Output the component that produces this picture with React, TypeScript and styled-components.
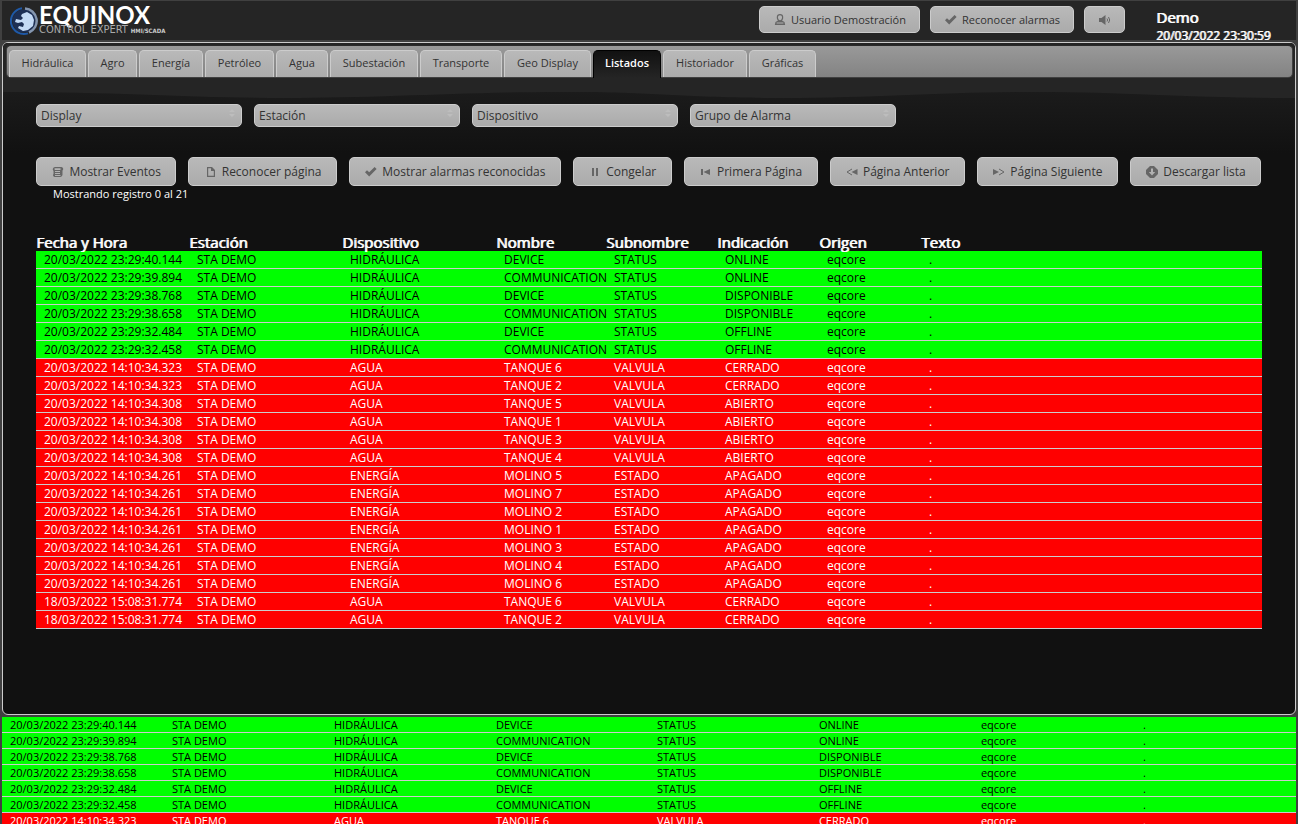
import React from "react";
import styled, { createGlobalStyle, css } from "styled-components";

const GlobalStyle = createGlobalStyle`
  *, *::before, *::after { box-sizing: border-box; }
  html, body, #root { height: 100%; }
  body {
    margin: 0;
    background: #404040;
    color: #fff;
    font-family: "Open Sans", sans-serif;
    font-size: 12px;
    overflow: hidden;
  }
  button, select { font-family: inherit; }
`;

const Page = styled.div`
  display: flex;
  flex-direction: column;
  height: 100vh;
  padding-left: 2px;
  padding-right: 2px;
  border-top: 1px solid #404040;
`;

const Header = styled.header`
  flex: none;
  display: flex;
  align-items: flex-start;
  height: 39px;
  padding: 5px 23px 0 8px;
  background: #252525;
  overflow: hidden;
`;

const Logo = styled.div`
  flex: none;
  display: flex;
  gap: 1px;
  margin-right: auto;
`;

const Mark = styled.svg`
  display: block;
  flex: none;
`;

const Wordmark = styled.div`
  display: flex;
  flex-direction: column;
  font-family: Lato, sans-serif;
  font-weight: 700;
  font-size: 24px;
  line-height: 17px;
  white-space: nowrap;
`;

const Tagline = styled.div`
  display: flex;
  align-items: baseline;
  gap: 3px;
  color: #aaa;
  font-family: "DejaVu Sans Condensed", "DejaVu Sans", sans-serif;
  font-weight: 400;
  font-size: 11px;
  line-height: 13px;
`;

const Product = styled.b`
  color: #ccc;
  font-size: 6px;
`;

const grey = css`
  border: 1px solid #ccc;
  background: linear-gradient(#b9b9b9, #ababab);
  color: #333;
`;

const HeaderActions = styled.div`
  display: flex;
  gap: 10px;
  margin-right: 31px;
`;

const Button = styled.button<{ $compact?: boolean }>`
  ${grey}
  flex: 1 1 auto;
  display: flex;
  align-items: center;
  justify-content: center;
  gap: 5px;
  height: ${(p) => (p.$compact ? 27 : 29)}px;
  padding: 0 13px 0 14px;
  border-radius: 5px;
  font-size: ${(p) => (p.$compact ? 11 : 12)}px;
  line-height: 16px;
  white-space: nowrap;
  cursor: pointer;
`;

const Icon = styled.svg`
  flex: none;
  display: block;
  fill: #666;
`;

const heavy = css`
  font-weight: 400;
  text-shadow: 1px 0 0 currentColor;
`;

const Clock = styled.div`
  ${heavy}
  width: 117px;
  padding-top: 1px;
  font-size: 12px;
  line-height: 18px;
  white-space: nowrap;
`;

const Station = styled.div`
  font-size: 15px;
  line-height: 20px;
`;

const Panel = styled.main`
  flex: none;
  display: flex;
  flex-direction: column;
  height: calc(100vh - 151px);
  margin-top: 2px;
  padding: 2px 2px 2px 3px;
  border: 1px solid #ccc;
  border-radius: 6px;
  background: #111;
  position: relative;
  overflow: hidden;
`;

const Wave = styled.svg`
  position: absolute;
  left: 0;
  top: 0;
  width: 100%;
  height: 110px;
`;

const Tabs = styled.nav`
  position: relative;
  display: flex;
  gap: 2px;
  height: 33px;
  padding: 4px 2px 0;
  border: 1px solid #404040;
  border-top-color: #2a2a2a;
  border-radius: 5px;
  background: linear-gradient(#999, #838383);
`;

const Tab = styled.a<{ $width: number; $active?: boolean }>`
  ${grey}
  flex: 0 1 ${(p) => p.$width}px;
  height: ${(p) => (p.$active ? 28 : 27)}px;
  padding: 4px 0 0;
  border-bottom: 0;
  border-radius: 5px 5px 0 0;
  font-size: 11px;
  line-height: 16px;
  text-align: center;
  text-decoration: none;
  white-space: nowrap;
  ${(p) =>
    p.$active &&
    css`
      border-color: #000;
      background: linear-gradient(#111, #252525);
      color: #fff;
      font-weight: 600;
    `}
`;

const Content = styled.div`
  position: relative;
  padding: 26px 31px 0 30px;
`;

const Filters = styled.div`
  display: flex;
  gap: 12px;
`;

const Filter = styled.label`
  ${grey}
  position: relative;
  flex: 0 1 206px;
  height: 23px;
  border-radius: 5px;
`;

const Select = styled.select`
  appearance: none;
  display: block;
  width: 100%;
  height: 21px;
  padding: 0 20px 0 4px;
  border: 0;
  background: transparent;
  color: #333;
  font-size: 12px;
  line-height: 20px;
`;

const Arrows = styled.svg`
  position: absolute;
  right: 6px;
  top: 4px;
  fill: #bdbdbd;
  pointer-events: none;
`;

const Toolbar = styled.div`
  display: flex;
  gap: 12px;
  margin-top: 30px;
  padding-right: 1px;
`;

const Summary = styled.p`
  margin: 0 0 32px;
  padding-left: 17px;
  font-size: 11px;
  line-height: 16px;
`;

const Table = styled.table`
  width: 100%;
  border-collapse: separate;
  border-spacing: 0;
  table-layout: fixed;
  white-space: nowrap;
`;

const HeadCell = styled.th`
  ${heavy}
  padding: 0 0 1px;
  font-size: 15px;
  line-height: 16px;
  text-align: left;
`;

const Row = styled.tr<{ $on: boolean; $small?: boolean }>`
  height: ${(p) => (p.$small ? 16 : 18)}px;
  background: ${(p) => (p.$on ? "#0f0" : "#f00")};
  color: ${(p) => (p.$on ? "#000" : "#fff")};
  font-size: ${(p) => (p.$small ? 11 : 12)}px;
  line-height: ${(p) => (p.$small ? 15 : 17)}px;
`;

const Cell = styled.td`
  padding: 0 0 0 8px;
  border-bottom: 1px solid #ccc;
`;

const Footer = styled.footer`
  flex: 1;
  min-height: 0;
  margin-top: 2px;
  overflow: hidden;
`;

type Event = [string, string, string, string, string];

const E = (time: string, device: string, name: string, sub: string, state: string): Event =>
  [time, device, name, sub, state];

const events: Event[] = [
  E("20/03/2022 23:29:40.144", "HIDRÁULICA", "DEVICE", "STATUS", "ONLINE"),
  E("20/03/2022 23:29:39.894", "HIDRÁULICA", "COMMUNICATION", "STATUS", "ONLINE"),
  E("20/03/2022 23:29:38.768", "HIDRÁULICA", "DEVICE", "STATUS", "DISPONIBLE"),
  E("20/03/2022 23:29:38.658", "HIDRÁULICA", "COMMUNICATION", "STATUS", "DISPONIBLE"),
  E("20/03/2022 23:29:32.484", "HIDRÁULICA", "DEVICE", "STATUS", "OFFLINE"),
  E("20/03/2022 23:29:32.458", "HIDRÁULICA", "COMMUNICATION", "STATUS", "OFFLINE"),
  E("20/03/2022 14:10:34.323", "AGUA", "TANQUE 6", "VALVULA", "CERRADO"),
  E("20/03/2022 14:10:34.323", "AGUA", "TANQUE 2", "VALVULA", "CERRADO"),
  E("20/03/2022 14:10:34.308", "AGUA", "TANQUE 5", "VALVULA", "ABIERTO"),
  E("20/03/2022 14:10:34.308", "AGUA", "TANQUE 1", "VALVULA", "ABIERTO"),
  E("20/03/2022 14:10:34.308", "AGUA", "TANQUE 3", "VALVULA", "ABIERTO"),
  E("20/03/2022 14:10:34.308", "AGUA", "TANQUE 4", "VALVULA", "ABIERTO"),
  E("20/03/2022 14:10:34.261", "ENERGÍA", "MOLINO 5", "ESTADO", "APAGADO"),
  E("20/03/2022 14:10:34.261", "ENERGÍA", "MOLINO 7", "ESTADO", "APAGADO"),
  E("20/03/2022 14:10:34.261", "ENERGÍA", "MOLINO 2", "ESTADO", "APAGADO"),
  E("20/03/2022 14:10:34.261", "ENERGÍA", "MOLINO 1", "ESTADO", "APAGADO"),
  E("20/03/2022 14:10:34.261", "ENERGÍA", "MOLINO 3", "ESTADO", "APAGADO"),
  E("20/03/2022 14:10:34.261", "ENERGÍA", "MOLINO 4", "ESTADO", "APAGADO"),
  E("20/03/2022 14:10:34.261", "ENERGÍA", "MOLINO 6", "ESTADO", "APAGADO"),
  E("18/03/2022 15:08:31.774", "AGUA", "TANQUE 6", "VALVULA", "CERRADO"),
  E("18/03/2022 15:08:31.774", "AGUA", "TANQUE 2", "VALVULA", "CERRADO"),
];

const tabs: [string, number][] = [
  ["Hidráulica", 77], ["Agro", 49], ["Energía", 64], ["Petróleo", 69], ["Agua", 52],
  ["Subestación", 88], ["Transporte", 82], ["Geo Display", 87], ["Listados", 68],
  ["Historiador", 84], ["Gráficas", 67],
];

const columns: [string, number][] = [
  ["Fecha y Hora", 153], ["Estación", 153], ["Dispositivo", 154], ["Nombre", 110],
  ["Subnombre", 111], ["Indicación", 102], ["Origen", 102], ["Texto", 341],
];

const tickerColumns = [162, 162, 162, 161, 162, 162, 162, 161];

const percent = (part: number, all: number[]) =>
  `${(part / all.reduce((a, b) => a + b, 0)) * 100}%`;

const icons = {
  user: (
    <path fillRule="evenodd" d="M6 0a3.200 3.200 0 0 0-3.200 3.400c0 1.300.5 2.400 1.200 3.100L1.500 8 .8 11h10.400l-.7-3L8 6.500c.7-.7 1.200-1.800 1.200-3.100A3.200 3.200 0 0 0 6 0zm0 1.200a2 2 0 0 1 2 2.200C8 4.800 7 6.200 6 6.200S4 4.800 4 3.400a2 2 0 0 1 2-2.200zM2.600 8.600h6.800v.8H2.600z" />
  ),
  check: <path d="M0 6.200 2 4.200l2.200 2.100L9.600 1l2 2-7.400 7.500z" />,
  sound: (
    <>
      <path d="M0 4h2.500L6.500 1v10L2.500 8H0z" />
      <path d="M8 4.500q1.200 1.500 0 3M9.500 3q2.400 3 0 6" fill="none" stroke="#666" />
    </>
  ),
  script: (
    <path fillRule="evenodd" d="M3 1h6.500a2 2 0 0 1 1 3.500V8A2.500 2.500 0 0 1 8 11H2.500A1.800 1.800 0 0 1 1.500 8V5A2.300 2.300 0 0 1 3 1zm0 1.200a1 1 0 0 0 0 1.800h5.500V2.200zM3 5v1h5V5zm0 2v1h5V7zm0 2v1h5l1-1z" />
  ),
  page: <path fillRule="evenodd" d="M2 1h5l3 3v7H2zm1.200 1.200v7.600h5.600V5H6V2.200z" />,
  pause: <path d="M3 2h2v8H3zM7 2h2v8H7z" />,
  first: <path d="M1 3h2v6H1zM3.500 6 10 3v6z" />,
  prev: (
    <>
      <path d="M5.500 6 11.500 3v6z" />
      <path d="M6 3 1 6l5 3" fill="none" stroke="#666" />
    </>
  ),
  next: (
    <>
      <path d="M0 3l6 3-6 3z" />
      <path d="M6 3l5 3-5 3" fill="none" stroke="#666" />
    </>
  ),
  down: (
    <path fillRule="evenodd" d="M4 0h4l4 4v4l-4 4H4L0 8V4zm1 2.500V6H2.800L6 9.500 9.200 6H7V2.500z" />
  ),
};

const Glyph = ({ name }: { name: keyof typeof icons }) => (
  <Icon width="12" height="12" viewBox="0 0 12 12" aria-hidden="true">{icons[name]}</Icon>
);

const actions: [keyof typeof icons, string][] = [
  ["script", "Mostrar Eventos"], ["page", "Reconocer página"],
  ["check", "Mostrar alarmas reconocidas"], ["pause", "Congelar"],
  ["first", "Primera Página"], ["prev", "Página Anterior"],
  ["next", "Página Siguiente"], ["down", "Descargar lista"],
];

const EventRow = ({ event, small }: { event: Event; small?: boolean }) => {
  const [time, device, name, sub, state] = event;
  return (
    <Row $on={sub === "STATUS"} $small={small}>
      {[time, "STA DEMO", device, name, sub, state, "eqcore", "."].map((text, i) => (
        <Cell key={i}>{text}</Cell>
      ))}
    </Row>
  );
};

export default function App() {
  const widths = columns.map((c) => c[1]);
  return (
    <>
      <GlobalStyle />
      <Page>
        <Header>
          <Logo>
            <Mark width="28" height="30" viewBox="0 0 28 30" aria-hidden="true">
              <circle cx="14" cy="15" r="11.500" fill="#1c2f55" />
              <path d="M12 2.200a13 13 0 1 0 6 25.200" fill="none" stroke="#1e59a8" strokeWidth="2" />
              <path d="M15 2.500a12.500 12.500 0 0 1 4 24" fill="none" stroke="#8496b0" strokeWidth="2.500" />
              <path d="M12 8l5-2 5 3 2 5-1 6-5 4-5 1-5-3 1-2 4 1 1-3-2-2-4 1-3-1 1-3 5 1 2-2-2-2z" fill="#c3daf5" />
            </Mark>
            <Wordmark>
              EQUINOX
              <Tagline>CONTROL EXPERT <Product>HMI/SCADA</Product></Tagline>
            </Wordmark>
          </Logo>
          <HeaderActions>
            <Button $compact><Glyph name="user" />Usuario Demostración</Button>
            <Button $compact><Glyph name="check" />Reconocer alarmas</Button>
            <Button $compact aria-label="Sonido"><Glyph name="sound" /></Button>
          </HeaderActions>
          <Clock>
            <Station>Demo</Station>
            20/03/2022 23:30:59
          </Clock>
        </Header>
        <Panel>
          <Wave viewBox="0 0 1292 110" preserveAspectRatio="none" aria-hidden="true">
            <defs>
              <linearGradient id="fade" x1="0" y1="0" x2="0" y2="1">
                <stop offset="0.4" stopColor="#1c1c1c" />
                <stop offset="1" stopColor="#111" />
              </linearGradient>
            </defs>
            <path d="M0 0H1292V110H0z" fill="url(#fade)" />
            <path d="M0 0H1292V55C1180 55 1130 49 1030 49S880 55 780 55 660 49 560 49 380 55 281 55 120 49 0 49z" fill="#252525" />
          </Wave>
          <Tabs>
            {tabs.map(([label, width]) => (
              <Tab key={label} href="#" $width={width} $active={label === "Listados"}>{label}</Tab>
            ))}
          </Tabs>
          <Content>
            <Filters>
              {["Display", "Estación", "Dispositivo", "Grupo de Alarma"].map((label) => (
                <Filter key={label}>
                  <Select aria-label={label}><option>{label}</option></Select>
                  <Arrows width="6" height="8" viewBox="0 0 6 8"><path d="M0 3 3 0l3 3zM0 5h6L3 8z" /></Arrows>
                </Filter>
              ))}
            </Filters>
            <Toolbar>
              {actions.map(([icon, label]) => (
                <Button key={label}><Glyph name={icon} />{label}</Button>
              ))}
            </Toolbar>
            <Summary>Mostrando registro 0 al 21</Summary>
            <Table>
              <colgroup>
                {widths.map((w, i) => <col key={i} style={{ width: percent(w, widths) }} />)}
              </colgroup>
              <thead>
                <tr>{columns.map(([label]) => <HeadCell key={label} scope="col">{label}</HeadCell>)}</tr>
              </thead>
              <tbody>{events.map((e, i) => <EventRow key={i} event={e} />)}</tbody>
            </Table>
          </Content>
        </Panel>
        <Footer>
          <Table>
            <colgroup>
              {tickerColumns.map((w, i) => <col key={i} style={{ width: percent(w, tickerColumns) }} />)}
            </colgroup>
            <tbody>{events.slice(0, 7).map((e, i) => <EventRow key={i} event={e} small />)}</tbody>
          </Table>
        </Footer>
      </Page>
    </>
  );
}
